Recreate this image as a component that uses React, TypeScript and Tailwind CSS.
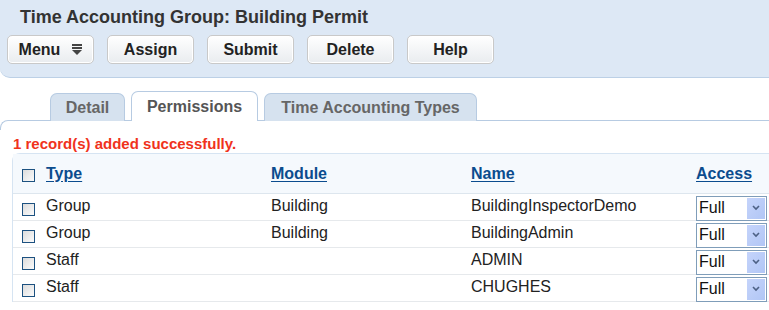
import React from "react";

const rows = [
  { type: "Group", module: "Building", name: "BuildingInspectorDemo" },
  { type: "Group", module: "Building", name: "BuildingAdmin" },
  { type: "Staff", module: "", name: "ADMIN" },
  { type: "Staff", module: "", name: "CHUGHES" },
];

const Checkbox = () => (
  <span className="inline-block w-[13px] h-[13px] border border-[#1c5180] bg-gradient-to-br from-[#dcdcdc] to-[#fbfbfb]" />
);

const Btn = ({ label, menu }: { label: string; menu?: boolean }) => (
  <button className="w-[87px] h-[29px] flex items-center justify-center gap-3 rounded-[5px] border border-[#c9c9c9] bg-gradient-to-b from-[#ffffff] to-[#e9ecef] text-[16px] font-bold text-[#222] shadow-[inset_0_0_0_1px_#fff]">
    {label}
    {menu && (
      <svg width="10" height="11" viewBox="0 0 10 11">
        <rect x="0" y="0" width="10" height="2" fill="#444" />
        <rect x="0" y="3" width="10" height="2" fill="#444" />
        <path d="M0 6h10l-5 5z" fill="#444" />
      </svg>
    )}
  </button>
);

const Select = () => (
  <div className="w-[71px] h-[25px] border border-[#7f9db9] bg-white flex items-center justify-between pl-[2px] pr-[1px]">
    <span className="text-[16px] text-[#111]">Full</span>
    <span className="w-[18px] h-[21px] bg-gradient-to-br from-[#c5d4fb] to-[#b1c6f5] flex items-center justify-center">
      <svg width="8" height="6" viewBox="0 0 8 6">
        <path d="M1 1l3 3 3-3" stroke="#4d6185" strokeWidth="1.6" fill="none" />
      </svg>
    </span>
  </div>
);

export default function App() {
  return (
    <div className="w-[769px] h-[310px] bg-white overflow-hidden font-['Liberation_Sans',Arial,sans-serif] text-[#333]">
      {/* Header */}
      <div className="h-[78px] bg-[#dde8f5] border-b border-[#bcd0e6] rounded-bl-[10px] pt-[7px]">
        <h1 className="pl-[20px] text-[18px] font-bold text-[#333] leading-[20px]">
          Time Accounting Group: Building Permit
        </h1>
        <div className="flex gap-[13px] pl-[7px] mt-[8px]">
          <Btn label="Menu" menu />
          <Btn label="Assign" />
          <Btn label="Submit" />
          <Btn label="Delete" />
          <Btn label="Help" />
        </div>
      </div>

      {/* Tabs */}
      <div className="relative mt-[14px] h-[29px]">
        <div className="absolute left-0 right-0 top-[28px] h-[10px] border-t border-l border-[#b7cbe2] rounded-tl-[8px]" />
        <div className="relative flex items-end pl-[50px] gap-[6px] h-full">
          <div className="w-[75px] h-[28px] rounded-t-[7px] border border-b-0 border-[#b7cbe2] bg-[#d6e2ef] flex items-center justify-center text-[16px] font-bold text-[#666]">
            Detail
          </div>
          <div className="w-[127px] h-[30px] rounded-t-[7px] border border-b-0 border-[#b7cbe2] bg-white flex items-center justify-center text-[16px] font-bold text-[#555]">
            Permissions
          </div>
          <div className="w-[213px] h-[28px] rounded-t-[7px] border border-b-0 border-[#b7cbe2] bg-[#d6e2ef] flex items-center justify-center text-[16px] font-bold text-[#666]">
            Time Accounting Types
          </div>
        </div>
      </div>

      <div className="pl-[13px] mt-[14px] text-[15px] font-bold text-[#f0321c] leading-[17px]">
        1 record(s) added successfully.
      </div>

      {/* Table */}
      <div className="ml-[12px] mt-[1px] border-l border-t border-[#d6e4f2] rounded-tl-[8px]">
        <div className="h-[40px] bg-[#f5f9fd] border-b border-[#dde6ee] flex items-center text-[16px] font-bold text-[#0b4c8e]">
          <div className="w-[33px] pl-[9px] flex items-center pt-[3px]">
            <Checkbox />
          </div>
          <div className="w-[225px]"><span className="underline underline-offset-2">Type</span></div>
          <div className="w-[200px]"><span className="underline underline-offset-2">Module</span></div>
          <div className="w-[225px]"><span className="underline underline-offset-2">Name</span></div>
          <div><span className="underline underline-offset-2">Access</span></div>
        </div>
        {rows.map((r, i) => (
          <div key={i} className="h-[27px] border-b border-[#e6e9ec] flex items-center text-[16px] text-[#222]">
            <div className="w-[33px] pl-[9px] flex items-center pt-[4px]">
              <Checkbox />
            </div>
            <div className="w-[225px] -mt-[2px]">{r.type}</div>
            <div className="w-[200px] -mt-[2px]">{r.module}</div>
            <div className="w-[225px] -mt-[2px]">{r.name}</div>
            <div className="pt-[2px]">
              <Select />
            </div>
          </div>
        ))}
      </div>
    </div>
  );
}
